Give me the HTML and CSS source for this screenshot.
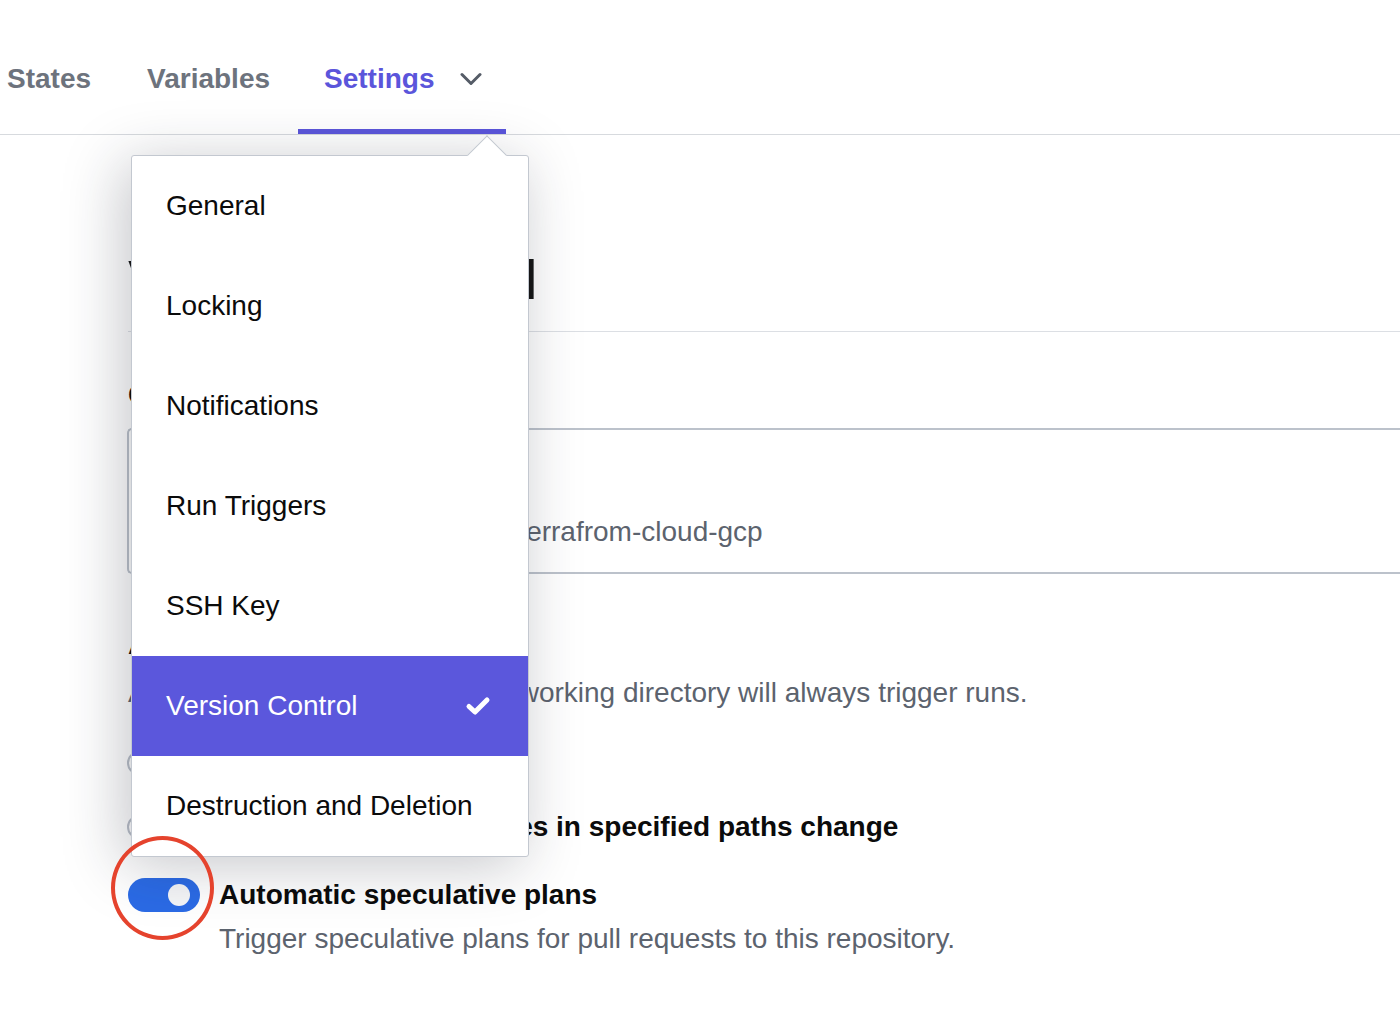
FILE: index.html
```html
<!DOCTYPE html>
<html lang="en">
<head>
<meta charset="utf-8">
<title>Workspace settings - Version Control</title>
<link rel="stylesheet" href="styles.css">
</head>
<body>
  <nav class="tabs">
    <a class="tab tab-first">States</a>
    <a class="tab">Variables</a>
    <a class="tab tab-active">Settings
      <svg class="chevron" width="22" height="14" viewBox="0 0 22 14" aria-hidden="true"><path d="M2 2.5 L11 11.5 L20 2.5" fill="none" stroke="#555c67" stroke-width="3" stroke-linecap="round" stroke-linejoin="round"/></svg>
    </a>
  </nav>

  <main class="content">
    <header class="page-head">
      <h1 class="title">Version Control</h1>
    </header>

    <section class="repo">
      <div class="field-label">Connected repository</div>
      <div class="repo-box">
        <span class="repo-name">Repository: my-organization/terrafrom-cloud-gcp</span>
      </div>
    </section>

    <section class="triggering">
      <div class="field-label">Automatic Run Triggering</div>
      <p class="desc">Also changes in the configured working directory will always trigger runs.</p>
      <div class="options">
        <label class="option"><span class="radio"></span><span class="option-text">Always trigger runs</span></label>
        <label class="option"><span class="radio"></span><span class="option-text">Only trigger runs when files in specified paths change</span></label>
      </div>
    </section>

    <section class="toggle-row">
      <span class="toggle"><span class="knob"></span></span>
      <div class="toggle-text">
        <div class="toggle-title">Automatic speculative plans</div>
        <div class="toggle-desc">Trigger speculative plans for pull requests to this repository.</div>
      </div>
    </section>
  </main>

  <div class="menu">
    <span class="menu-arrow"></span>
    <ul class="menu-list">
      <li class="menu-item">General</li>
      <li class="menu-item">Locking</li>
      <li class="menu-item">Notifications</li>
      <li class="menu-item">Run Triggers</li>
      <li class="menu-item">SSH Key</li>
      <li class="menu-item menu-item-active">Version Control
        <svg class="check" width="26" height="20" viewBox="0 0 26 20" aria-hidden="true"><path d="M4 10.5 L10 16 L22 4" fill="none" stroke="#ffffff" stroke-width="5" stroke-linecap="round" stroke-linejoin="round"/></svg>
      </li>
      <li class="menu-item">Destruction and Deletion</li>
    </ul>
  </div>

  <span class="annotation"></span>
</body>
</html>
```

FILE: styles.css
```css
html, body {
  margin: 0;
  padding: 0;
  background: #ffffff;
}

body {
  font-family: "Liberation Sans", Arial, sans-serif;
  color: #0b0b0b;
  width: 1400px;
  height: 1014px;
  overflow: hidden;
  position: relative;
}

/* ---------- tabs ---------- */
.tabs {
  display: flex;
  height: 135px;
  box-sizing: border-box;
  border-bottom: 1px solid #d7dade;
}

.tab {
  display: flex;
  align-items: center;
  box-sizing: border-box;
  height: 134px;
  padding: 28px 28px 0 28px;
  border-bottom: 5px solid transparent;
  font-size: 28px;
  font-weight: 700;
  color: #6d737d;
  text-decoration: none;
  white-space: nowrap;
}

.tab-first {
  margin-left: -21px;
}

.tab-active {
  color: #5b55db;
  border-bottom-color: #5b55db;
  padding-left: 26px;
  padding-right: 24px;
  gap: 25px;
}

.chevron {
  display: block;
}

/* ---------- page content ---------- */
.content {
  margin-left: 128px;
}

.page-head {
  padding-top: 114px;
  padding-bottom: 20px;
  border-bottom: 1px solid #dcdfe4;
}

.title {
  margin: 0;
  font-size: 55px;
  line-height: 62px;
  font-weight: 700;
  color: #151515;
  white-space: nowrap;
}

.field-label {
  font-size: 28px;
  line-height: 34px;
  font-weight: 700;
  color: #0b0b0b;
}

.repo {
  padding-top: 46px;
}

.repo-box {
  margin-top: 16px;
  margin-left: -1px;
  height: 146px;
  box-sizing: border-box;
  border: 2px solid #bcc2cb;
  border-right: none;
  border-radius: 5px 0 0 5px;
  padding: 85px 0 0 33px;
}

.repo-name {
  display: block;
  font-size: 28px;
  line-height: 34px;
  color: #5c636e;
  white-space: nowrap;
}

.triggering {
  padding-top: 54px;
}

.desc {
  margin: 14px 0 0 0;
  font-size: 28px;
  line-height: 34px;
  color: #5c636e;
  white-space: nowrap;
}

.options {
  margin-top: 36px;
  display: flex;
  flex-direction: column;
  gap: 30px;
}

.option {
  display: flex;
  align-items: center;
  gap: 27px;
}

.radio {
  width: 24px;
  height: 24px;
  box-sizing: border-box;
  border: 2px solid #b9bfc9;
  border-radius: 50%;
  flex: none;
  margin-left: -1px;
}

.option-text {
  font-size: 28px;
  line-height: 34px;
  font-weight: 700;
  white-space: nowrap;
}

.toggle-row {
  margin-top: 34px;
  display: flex;
  align-items: flex-start;
  gap: 19px;
}

.toggle {
  flex: none;
  width: 72px;
  height: 34px;
  border-radius: 17px;
  background: #2b6be6;
  display: flex;
  align-items: center;
  justify-content: flex-end;
  padding-right: 10px;
  box-sizing: border-box;
}

.knob {
  width: 22px;
  height: 22px;
  border-radius: 50%;
  background: #f5f6f8;
}

.toggle-title {
  font-size: 28px;
  line-height: 34px;
  font-weight: 700;
  color: #0b0b0b;
  white-space: nowrap;
}

.toggle-desc {
  margin-top: 10px;
  font-size: 28px;
  line-height: 34px;
  color: #5c636e;
  white-space: nowrap;
}

/* ---------- dropdown menu (overlay) ---------- */
.menu {
  position: absolute;
  left: 131px;
  top: 155px;
  width: 398px;
  box-sizing: border-box;
  background: #ffffff;
  border: 1px solid #c3c8d0;
  border-radius: 3px;
  box-shadow: -8px 8px 60px rgba(30, 35, 50, 0.26);
  z-index: 10;
}

.menu-arrow {
  position: absolute;
  left: 341px;
  top: -15px;
  width: 28px;
  height: 28px;
  background: #ffffff;
  border-top: 1px solid #c3c8d0;
  border-left: 1px solid #c3c8d0;
  box-sizing: border-box;
  transform: rotate(45deg);
}

.menu-list {
  position: relative;
  list-style: none;
  margin: 0;
  padding: 0;
}

.menu-item {
  height: 100px;
  display: flex;
  align-items: center;
  justify-content: space-between;
  padding: 0 37px 0 34px;
  font-size: 28px;
  color: #0b0b0b;
  white-space: nowrap;
}

.menu-item-active {
  background: #5b57dc;
  color: #ffffff;
}

.check {
  display: block;
}

/* ---------- annotation ---------- */
.annotation {
  position: absolute;
  left: 111px;
  top: 836px;
  width: 103px;
  height: 104px;
  box-sizing: border-box;
  border: 4px solid #e5432d;
  border-radius: 50%;
  z-index: 20;
}
```
